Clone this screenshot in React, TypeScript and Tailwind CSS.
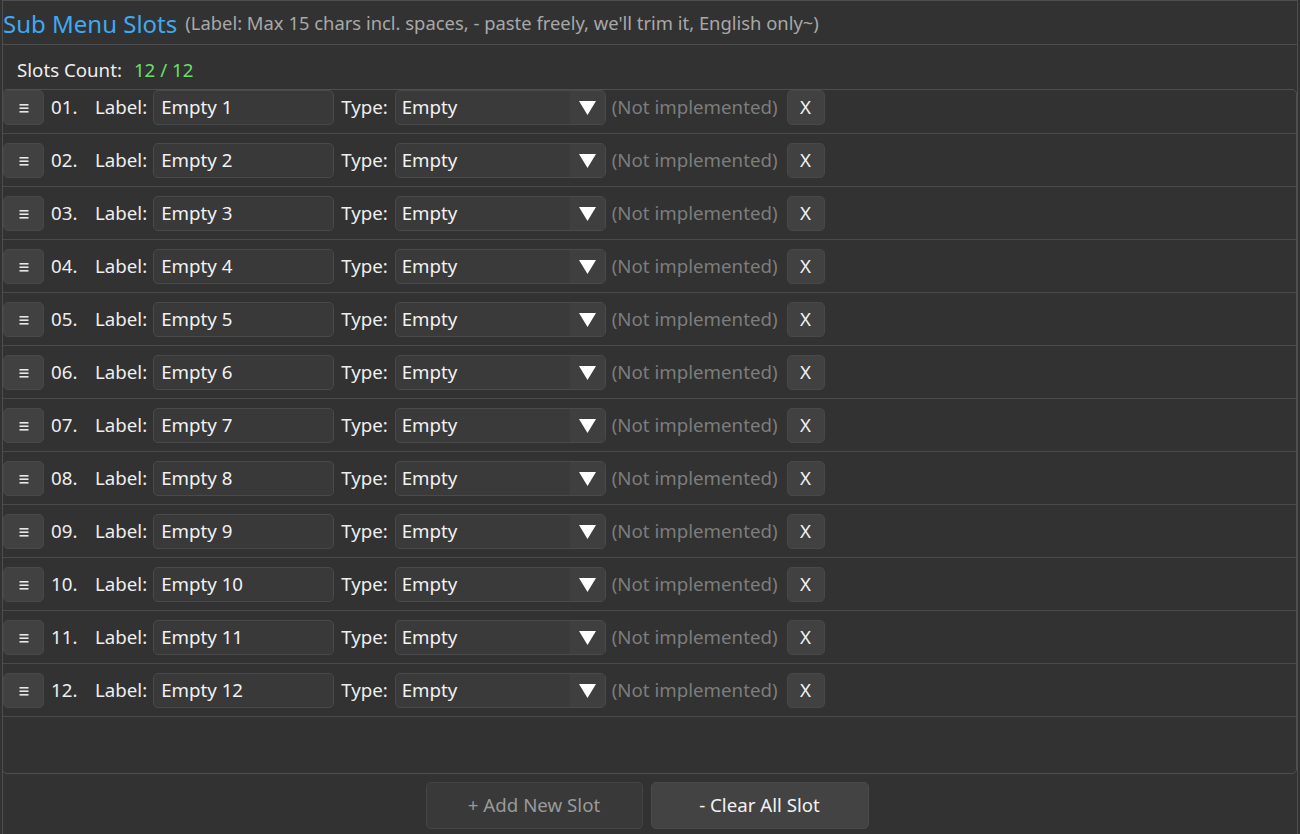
import React from "react";

function DragIcon() {
  return (
    <svg width="10" height="12" viewBox="0 0 10 12" className="block">
      <rect x="0.5" y="2" width="9" height="1.6" fill="#e8e8e8" />
      <rect x="0.5" y="5.4" width="9" height="1.6" fill="#e8e8e8" />
      <rect x="0.5" y="9" width="9" height="1.6" fill="#e8e8e8" />
    </svg>
  );
}

function Arrow() {
  return (
    <svg width="17" height="14" viewBox="0 0 17 14" className="block">
      <polygon points="0,0 17,0 8.5,14" fill="#ffffff" />
    </svg>
  );
}

function Row({ n, first }: { n: number; first: boolean }) {
  const num = String(n).padStart(2, "0") + ".";
  return (
    <div
      className={`flex items-center border-b border-[#4a4a4a] pb-[8px] ${first ? "pt-0" : "pt-[9px]"}`}
    >
      <div className="w-[41px] h-[35px] flex items-center justify-center rounded-[5px] bg-[#414141] border border-[#484848]">
        <DragIcon />
      </div>
      <span className="ml-[7px] w-[36px] text-[#eeeeee]">{num}</span>
      <span className="ml-[8px] text-[#eeeeee]">Label:</span>
      <div className="ml-[6px] w-[181px] h-[35px] flex items-center pl-[7px] rounded-[5px] bg-[#393939] border border-[#4a4a4a] text-[#f2f2f2]">
        Empty {n}
      </div>
      <span className="ml-[7px] text-[#eeeeee]">Type:</span>
      <div className="ml-[7px] w-[211px] h-[35px] flex items-stretch rounded-[5px] bg-[#3a3a3a] border border-[#4a4a4a] overflow-hidden">
        <div className="flex-1 flex items-center pl-[6px] text-[#f2f2f2]">Empty</div>
        <div className="w-[35px] flex items-center justify-center bg-[#3f3f3f]">
          <Arrow />
        </div>
      </div>
      <span className="ml-[6px] text-[#7d7d7d]">(Not implemented)</span>
      <div className="ml-[9px] w-[38px] h-[35px] flex items-center justify-center rounded-[5px] bg-[#414141] border border-[#484848] text-[#f2f2f2]">
        X
      </div>
    </div>
  );
}

export default function App() {
  const rows = Array.from({ length: 12 }, (_, i) => i + 1);
  return (
    <div
      className="w-[1300px] h-[834px] bg-[#323232] pl-[2px] overflow-hidden"
      style={{ fontFamily: '"Noto Sans", "Open Sans", sans-serif' }}
    >
      <div className="w-[1296px] h-[834px] border-l border-r border-t border-[#4e4e4e] flex flex-col">
        <div className="h-[44px] border-b border-[#4e4e4e] flex items-center pl-0 pt-[1px]">
          <span className="text-[24px] leading-none text-[#3fa9f0] pt-[2px]">Sub Menu Slots</span>
          <span className="ml-[8px] text-[18.4px] text-[#a8a8a8] leading-none">
            (Label: Max 15 chars incl. spaces, - paste freely, we'll trim it, English only~)
          </span>
        </div>
        <div className="h-[44px] flex items-center pl-[14px] text-[18.7px] pt-[6px]">
          <span className="text-[#eeeeee]">Slots Count:</span>
          <span className="ml-[12px] text-[#66e066]">12 / 12</span>
        </div>
        <div className="h-[685px] -ml-[1px] border border-[#4e4e4e] rounded-[5px] text-[18.7px] leading-none">
          {rows.map((n) => (
            <Row key={n} n={n} first={n === 1} />
          ))}
        </div>
        <div className="flex justify-center gap-[8px] mt-[8px] pr-[6px]">
          <div className="w-[217px] h-[47px] flex items-center justify-center rounded-[5px] bg-[#393939] border border-[#454545] text-[18.7px] text-[#9a9a9a]">
            + Add New Slot
          </div>
          <div className="w-[218px] h-[47px] flex items-center justify-center rounded-[5px] bg-[#434343] border border-[#4a4a4a] text-[18.7px] text-[#f2f2f2]">
            - Clear All Slot
          </div>
        </div>
      </div>
    </div>
  );
}
